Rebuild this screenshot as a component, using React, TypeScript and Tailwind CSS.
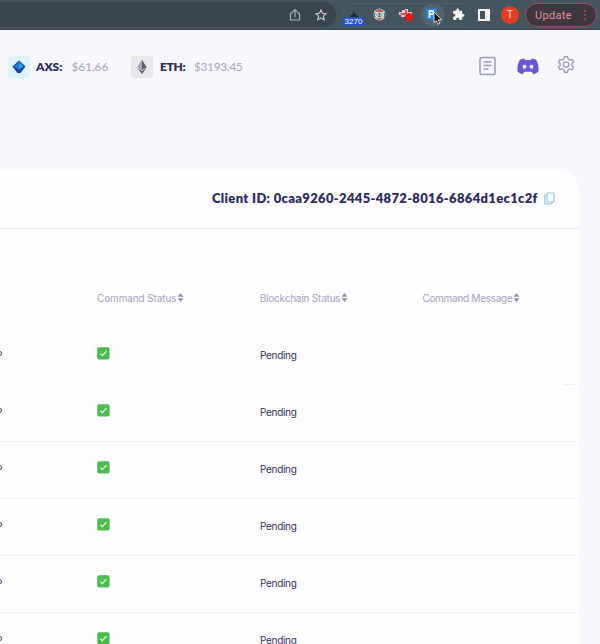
import React from 'react';

const rows = [0, 1, 2, 3, 4, 5];

function SortIcon() {
  return (
    <svg width="7" height="9" viewBox="0 0 6 9" className="ml-px shrink-0" fill="#8f90ab">
      <path d="M3 0 6 3.8H0zM3 9 0 5.2h6z" />
    </svg>
  );
}

function Heading({ label, spacing }: { label: string; spacing: string }) {
  return (
    <div className="flex w-[162.7px] shrink-0 items-center">
      <span className={`text-[10px] leading-[14px] whitespace-nowrap text-[#a3a4ba] ${spacing}`}>{label}</span>
      <SortIcon />
    </div>
  );
}

function CheckBadge() {
  return (
    <svg width="13" height="13" viewBox="0 0 13 13">
      <rect x="0.2" y="0.2" width="12.4" height="12.4" rx="1.8" fill="#4dbb50" />
      <path d="m3.3 6.7 2 1.9 4.2-4.5" fill="none" stroke="#e8ffe5" strokeWidth="1.1" />
    </svg>
  );
}

function BrowserBar() {
  return (
    <header className="flex h-[30px] w-full shrink-0 items-center border-b border-[#39454c] bg-[#46555d]">
      <div className="flex h-[25px] w-[336px] shrink-0 items-center rounded-r-full bg-[#39444b] pl-[289px]">
        <svg width="12" height="14" viewBox="0 0 12 14" fill="none" stroke="#a3acb1" strokeWidth="1.2">
          <path d="M4 5H1.5v7h9V5H8M6 9V1.5M3.5 4 6 1.5 8.500 4" />
        </svg>
        <svg className="ml-[14px]" width="12" height="12" viewBox="0 0 12 12" fill="none" stroke="#bdc4c7" strokeWidth="1.2">
          <path d="m6 1 1.5 3.3 3.6.4-2.700 2.400.8 3.600L6 8.900l-3.200 1.800.8-3.600L.9 4.700l3.600-.4z" />
        </svg>
      </div>
      <div className="ml-[7px] flex h-[24px] w-[122px] shrink-0 items-center rounded-l-full border border-r-0 border-dotted border-[#586870]">
        <div className="-ml-px flex w-[21px] shrink-0 flex-col items-center pt-[8px]">
          <svg width="8" height="6" viewBox="0 0 8 6"><path d="M4 0 5 3l3 2v1H0V5l3-2z" fill="#202a32" /></svg>
          <span className="w-[21px] rounded-[1px] bg-[#2455c5] text-center font-['Liberation_Sans',sans-serif] text-[8px] leading-[9px] text-white">3270</span>
        </div>
        <svg className="ml-[9px] shrink-0" width="13" height="13" viewBox="0 0 13 13">
          <circle cx="6.500" cy="6.500" r="6" fill="#c8d3c5" />
          <path d="M2 3Q6.500-1 11 3L9 4H4z" fill="#b75d57" />
          <path d="M1 5h11v4H1z" fill="#4e715e" />
          <circle cx="3.800" cy="7" r="2" fill="#e4ece1" /><circle cx="9.200" cy="7" r="2" fill="#e4ece1" />
          <circle cx="4" cy="7" r=".7" fill="#4e715e" /><circle cx="9" cy="7" r=".7" fill="#4e715e" />
          <path d="M3 10.500Q6.500 9 10 10.500L6.500 12.500z" fill="#b96f68" />
        </svg>
        <svg className="ml-[13px] shrink-0" width="15" height="14" viewBox="0 0 15 14">
          <path d="M0 4h3V2h3V1h3v3h4v6H6V9H2V7H0z" fill="#f0c3c7" />
          <path d="M1 5h5v2H2zM6 2h2v4H6z" fill="#d4535e" />
          <circle cx="10" cy="9.300" r="4.200" fill="#e81919" />
        </svg>
        <div className="relative ml-[7px] flex h-[22px] w-[24px] shrink-0 items-center justify-center rounded-full bg-[#53636e]">
          <svg className="-ml-[3px]" width="12" height="13" viewBox="0 0 12 13">
            <rect y="0.500" width="11" height="11" rx="1" fill="#2684de" />
            <path d="M3.500 10V3h3.500v3.200H3.500" fill="none" stroke="#eef8ff" strokeWidth="1.800" />
          </svg>
          <svg className="absolute top-[7px] left-[12px]" width="10" height="15" viewBox="0 0 10 15">
            <path d="M1 1v10.500l2.300-2 1.500 3.800 2-.9-1.500-3.500 3.300-.2z" fill="#07090a" stroke="#e6eaee" strokeWidth="0.900" />
          </svg>
        </div>
      </div>
      <div className="-ml-[13px] flex shrink-0 items-center">
        <svg width="13" height="13" viewBox="0 0 24 24" fill="#f5f7f8">
          <path d="M20.500 11H19V7c0-1.100-.9-2-2-2h-4V3.500a2.500 2.500 0 0 0-5 0V5H4c-1.100 0-2 .9-2 2v3.800h1.500a2.700 2.700 0 0 1 0 5.400H2V20c0 1.100.9 2 2 2h3.800v-1.500a2.700 2.700 0 0 1 5.400 0V22H17c1.100 0 2-.9 2-2v-4h1.500a2.500 2.500 0 0 0 0-5z" />
        </svg>
        <svg className="ml-[13px]" width="12" height="12" viewBox="0 0 12 12">
          <path d="M0 0h12v12H0zM2 2v8h5V2z" fill="#f5f7f8" fillRule="evenodd" />
        </svg>
        <span className="ml-[11px] flex size-[18px] items-center justify-center rounded-full bg-[#e33d22] font-['Roboto',sans-serif] text-[10px] text-[#ffe5dd]">T</span>
        <div className="ml-[6px] flex h-[24px] w-[72px] items-center rounded-full border border-[#a34c60] bg-[#3e3740] pt-px pl-[9px]">
          <span className="font-['Roboto',sans-serif] text-[11px] leading-none tracking-[0.300px] text-[#df8f9e]">Update</span>
          <span className="ml-[12px] flex flex-col gap-[2px]">
            <i className="size-[2px] bg-[#a63850]" /><i className="size-[2px] bg-[#a63850]" /><i className="size-[2px] bg-[#a63850]" />
          </span>
        </div>
      </div>
    </header>
  );
}

export default function App() {
  return (
    <main className="flex h-[644px] w-[600px] flex-col overflow-hidden bg-[#f7f7fe] font-['Inter',sans-serif]">
      <BrowserBar />
      <nav className="flex h-[140px] shrink-0 items-start pt-[26px] font-['Lato',sans-serif] text-[12px]">
        <div className="ml-[8px] flex h-[22px] w-[123px] items-center">
          <span className="flex size-[22px] items-center justify-center rounded-[3px] bg-[#ddf4ff]">
            <svg width="14" height="14" viewBox="0 0 14 14">
              <path d="M7 .5 13.500 6.500 8.500 13h-3L.5 6.500z" fill="#16459d" />
              <path d="M7 2 11.500 6.500 7 9.500 2.500 6.500z" fill="#22a5ed" /><path d="M7 2v7.500L2.500 6.500z" fill="#2375d2" />
            </svg>
          </span>
          <b className="ml-[6px] w-[35.500px] font-extrabold tracking-[-0.100px] text-[#2e2c61]">AXS:</b>
          <span className="tracking-[-0.150px] text-[#a8a9b9]">$61.66</span>
        </div>
        <div className="flex h-[22px] w-[348px] items-center">
          <span className="flex size-[22px] items-center justify-center rounded-[3px] bg-[#e7e7ec]">
            <svg width="10" height="14" viewBox="0 0 10 14">
              <path d="M5 0 9.500 7.200 5 10 .5 7.200z" fill="#777487" /><path d="M5 0v10L.5 7.200z" fill="#aaa7b5" />
              <path d="M5 0v10l4.500-2.800zM.5 8.300 5 14l4.500-5.700L5 11z" fill="#625d72" />
            </svg>
          </span>
          <b className="ml-[7px] w-[34px] font-extrabold tracking-[-0.300px] text-[#2e2c61]">ETH:</b>
          <span className="tracking-[-0.400px] text-[#a8a9b9]">$3193.45</span>
        </div>
        <svg width="17" height="20" viewBox="0 0 17 20" fill="none" stroke="#9a9bb5" strokeWidth="1.500">
          <rect x="1" y="1.500" width="15" height="17" rx="1.800" /><path d="M4.500 6h8M4.500 9.500h8M4.500 13h5" />
        </svg>
        <svg className="mt-[2px] ml-[21px]" width="22" height="17" viewBox="0 0 22 17">
          <path d="M7.300.6 8 2h6l.7-1.400c2 .3 3.700.9 4.600 1.500 1.900 3.700 2.600 7.300 2.200 11.300a15 15 0 0 1-5.200 2.800l-1.500-2.400H7.200l-1.500 2.400a15 15 0 0 1-5.200-2.800C.1 9.400.8 5.800 2.700 2.100c.9-.6 2.600-1.200 4.600-1.500z" fill="#6956d2" />
          <ellipse cx="7.500" cy="8.700" rx="1.900" ry="2" fill="#f7f7fe" /><ellipse cx="14.500" cy="8.700" rx="1.900" ry="2" fill="#f7f7fe" />
        </svg>
        <svg className="ml-[18px]" width="18" height="17" viewBox="1 1 22 22" fill="none" stroke="#9c9db5" strokeWidth="1.700" strokeLinejoin="round">
          <path d="m10 2-.8 3-2 1.200-3-.9-2 3.400 2.300 2.200v2.200l-2.300 2.200 2 3.400 3-.9 2 1.200.8 3h4l.8-3 2-1.200 3 .9 2-3.400-2.300-2.200v-2.200l2.300-2.200-2-3.400-3 .9-2-1.200-.8-3z" />
          <circle cx="12" cy="12" r="3.500" />
        </svg>
      </nav>
      <section className="flex h-[474px] w-[579px] shrink-0 flex-col overflow-hidden rounded-tr-[20px] bg-[#fefdff]">
        <div className="flex h-[59px] shrink-0 items-center border-b border-[#e5e7f1] pb-px pl-[212px]">
          <h1 className="w-[326px] font-['Lato',sans-serif] text-[13px] font-extrabold tracking-[0.330px] whitespace-nowrap text-[#2e2c61]">Client ID: 0caa9260-2445-4872-8016-6864d1ec1c2f</h1>
          <svg className="ml-[6px]" width="11" height="13" viewBox="0 0 11 13" fill="none" stroke="#91c9e3" strokeWidth="1.200">
            <rect x="3" y="1" width="7" height="9" rx="1" /><path d="M3 3H1.500a.8.8 0 0 0-.8.8V11c0 .6.4 1 1 1H7q1 0 1-2" />
          </svg>
        </div>
        <div className="flex h-[99px] shrink-0 items-center pt-[38px] pl-[97px]">
          <Heading label="Command Status" spacing="tracking-[-0.120px]" />
          <Heading label="Blockchain Status" spacing="tracking-[-0.200px]" />
          <Heading label="Command Message" spacing="tracking-[-0.280px]" />
        </div>
        {rows.map((row) => (
          <div key={row} className="flex h-[57px] shrink-0 flex-col">
            <div className="flex h-[56px] text-[10px] leading-[14px] text-[#34325b]">
              <div className="flex w-[97px] shrink-0 pt-[20px]"><span className="-ml-[4px]">P</span></div>
              <div className="w-[163px] shrink-0 pt-[19px]"><CheckBadge /></div>
              <div className="pt-[20px] tracking-[-0.300px]">Pending</div>
            </div>
            <div className={row === 0 ? 'ml-[563px] h-px w-[14px] bg-[#f0f1f8]' : 'h-px w-full bg-[#f1f1f6]'} />
          </div>
        ))}
      </section>
    </main>
  );
}
